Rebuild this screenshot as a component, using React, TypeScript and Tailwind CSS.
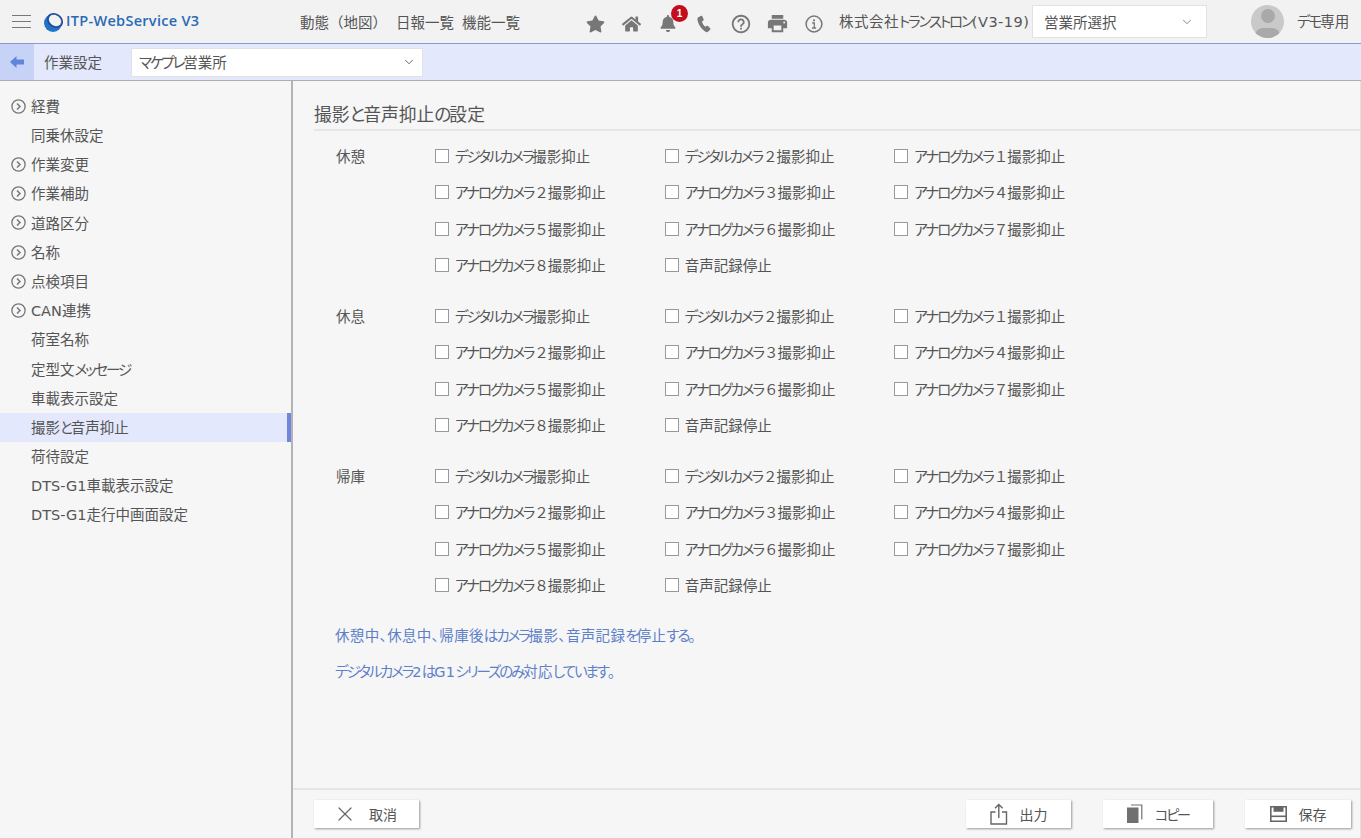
import { FaStar, FaHome, FaBell } from "react-icons/fa";
import { MdPrint, MdHelpOutline } from "react-icons/md";
import { ChevronDown, X } from "lucide-react";

const SIDE_ITEMS = [
  { label: "経費", arrow: true },
  { label: "同乗休設定" },
  { label: "作業変更", arrow: true },
  { label: "作業補助", arrow: true },
  { label: "道路区分", arrow: true },
  { label: "名称", arrow: true },
  { label: "点検項目", arrow: true },
  { label: "CAN連携", arrow: true },
  { label: "荷室名称" },
  { label: "定型文メッセージ" },
  { label: "車載表示設定" },
  { label: "撮影と音声抑止", active: true },
  { label: "荷待設定" },
  { label: "DTS-G1車載表示設定" },
  { label: "DTS-G1走行中画面設定" },
];

const OPTIONS = [
  "デジタルカメラ撮影抑止",
  "デジタルカメラ２撮影抑止",
  "アナログカメラ１撮影抑止",
  "アナログカメラ２撮影抑止",
  "アナログカメラ３撮影抑止",
  "アナログカメラ４撮影抑止",
  "アナログカメラ５撮影抑止",
  "アナログカメラ６撮影抑止",
  "アナログカメラ７撮影抑止",
  "アナログカメラ８撮影抑止",
  "音声記録停止",
];

const GROUPS = ["休憩", "休息", "帰庫"];

// kana in the picture are set narrower than kanji, full-width digits stay wide
function T({ text }: { text: string }) {
  const parts = text.split(/([\u3041-\u30ff]+|[１-８])/);
  return (
    <span className="pt-[2px]">
      {parts.map((p, i) => {
        if (i % 2 === 0) return <span key={i}>{p}</span>;
        if (/[１-８]/.test(p)) return <span key={i} className="-mr-[1px] ml-[1px] [font-feature-settings:normal]">{p}</span>;
        return <span key={i} className="tracking-[-2.100px]">{p}</span>;
      })}
    </span>
  );
}

function Logo() {
  return (
    <svg width="22" height="22" viewBox="0 0 22 22" className="shrink-0">
      <circle cx="10" cy="12" r="9" fill="#1f73c8" />
      <ellipse cx="12" cy="9.500" rx="6.500" ry="5.200" fill="#f2f2f2" transform="rotate(35 12 9.500)" />
      <ellipse cx="12" cy="9.500" rx="7.800" ry="6.200" fill="none" stroke="#2b4a94" strokeWidth="1.500" transform="rotate(35 12 9.500)" />
    </svg>
  );
}

function PhoneIcon() {
  return (
    <svg width="15" height="18" viewBox="0 0 15 18" fill="#777">
      <path d="M1 2.500 4.200.800c.5-.2.900 0 1.100.4l1.400 3.300c.2.400 0 .8-.3 1L5 6.500c.4 2 1.700 4 3.400 5.200l1.500-.9c.4-.2.800-.2 1.100.1l2.300 2.500c.3.3.3.800 0 1.100l-2.300 2.300c-.5.500-1.200.6-1.800.3C4.200 14.200.8 9 .4 3.700c0-.5.200-1 .6-1.200Z" />
    </svg>
  );
}

function InfoIcon() {
  return (
    <svg width="18" height="18" viewBox="0 0 18 18" fill="none" stroke="#777">
      <circle cx="9" cy="9" r="7.900" strokeWidth="1.500" />
      <circle cx="9" cy="5.300" r="1.100" fill="#777" stroke="none" />
      <path d="M7.200 8h2.100v4.800M7 13h4.100" strokeWidth="1.300" />
    </svg>
  );
}

function ArrowBullet() {
  return (
    <svg width="15" height="15" viewBox="0 0 15 15" fill="none" stroke="#777" className="shrink-0">
      <circle cx="7.500" cy="7.500" r="6.600" strokeWidth="1.300" />
      <path d="M6 4.500 9 7.500 6 10.500" strokeWidth="1.500" />
    </svg>
  );
}

function BackArrow() {
  return (
    <svg width="14" height="12" viewBox="0 0 14 12" fill="#5f86d8">
      <path d="M0 6 6.500 0v3.500H14v5H6.500V12Z" />
    </svg>
  );
}

function ShareIcon() {
  return (
    <svg width="18" height="22" viewBox="0 0 18 22" fill="none" stroke="#666" strokeWidth="1.400">
      <path d="M5.500 9H1v12h15.500V9H12" />
      <path d="M8.800 15V1.500M5 5.200 8.800 1.400l3.800 3.800" />
    </svg>
  );
}

function CopyIcon() {
  return (
    <svg width="16" height="20" viewBox="0 0 16 20">
      <path d="M0 3.500h11.500V19H0Z" fill="#707070" />
      <path d="M4 1h10.800v14.500" fill="none" stroke="#707070" strokeWidth="1.200" />
    </svg>
  );
}

function SaveIcon() {
  return (
    <svg width="17" height="16" viewBox="0 0 17 16">
      <path d="M.800.800h15.400v14.400H.800Z" fill="none" stroke="#666" strokeWidth="1.600" />
      <path d="M3.500 1h10v4.800h-10Z" fill="#666" />
      <path d="M1 9.500h15v1.600H1Z" fill="#666" />
    </svg>
  );
}

function FooterButton({ icon, label, width }: { icon: React.ReactNode; label: string; width: string }) {
  return (
    <button className={`flex h-[28px] items-center justify-center gap-[12px] bg-white text-[14px] text-[#555] shadow-[1px_1px_2px_#999] ${width}`}>
      {icon}
      <T text={label} />
    </button>
  );
}

export default function App() {
  return (
    <div className="flex h-screen flex-col overflow-hidden bg-[#f6f6f6] font-['DejaVu_Sans','Noto_Sans_CJK_JP',sans-serif] text-[14.500px] leading-none text-[#555] [font-feature-settings:'palt']">
      <header className="flex h-[44px] shrink-0 items-center border-b border-[#8f97d6] bg-[#f2f2f2]">
        <div className="ml-[12px] flex w-[19px] flex-col gap-[4.500px]">
          <div className="h-[1.500px] bg-[#777]" />
          <div className="h-[1.500px] bg-[#777]" />
          <div className="h-[1.500px] bg-[#777]" />
        </div>
        <div className="ml-[12px] flex w-[257px] items-center">
          <Logo />
          <span className="ml-[1px] font-['Open_Sans',sans-serif] text-[14.500px] font-semibold tracking-[0.300px] text-[#2a6ab5]">ITP-WebService V3</span>
        </div>
        <nav className="flex items-center pt-[3px] [font-feature-settings:normal]">
          <span className="w-[96px]">動態（地図）</span>
          <span className="w-[66px]">日報一覧</span>
          <span className="w-[59px]">機能一覧</span>
        </nav>
        <div className="ml-[65px] flex items-center pt-[4px] text-[#777]">
          <FaStar className="h-[18px] w-[19px]" />
          <FaHome className="ml-[17px] h-[18px] w-[19px]" />
          <div className="relative ml-[19px]">
            <FaBell className="h-[17px] w-[16px]" />
            <span className="absolute -top-[10px] left-[11px] flex h-[17px] w-[17px] items-center justify-center rounded-full bg-[#c40d1e] font-['Liberation_Sans',sans-serif] text-[10px] font-bold text-white">1</span>
          </div>
          <div className="ml-[21px] flex"><PhoneIcon /></div>
          <MdHelpOutline className="ml-[18px] h-[22px] w-[22px]" />
          <MdPrint className="ml-[14px] h-[23px] w-[23px]" />
          <div className="ml-[16px] flex"><InfoIcon /></div>
        </div>
        <span className="ml-[16px] w-[193px] whitespace-nowrap pt-[1px] tracking-[0.500px]"><T text="株式会社トランストロン(V3-19)" /></span>
        <div className="flex h-[33px] w-[175px] items-center justify-between border border-[#e2e2e2] bg-white pl-[11px] pr-[12px]">
          <span className="pt-[4px]">営業所選択</span>
          <ChevronDown className="h-[14px] w-[14px] text-[#777]" strokeWidth={1.500} />
        </div>
        <div className="relative ml-[44px] h-[33px] w-[33px] overflow-hidden rounded-full bg-[#c9c9c9]">
          <div className="absolute left-[10px] top-[4px] h-[14px] w-[14px] rounded-full bg-[#a9a9a9]" />
          <div className="absolute left-[4px] top-[23px] h-[14px] w-[25px] rounded-t-[8px] bg-[#a9a9a9]" />
        </div>
        <span className="ml-[13px] pt-[1px]"><T text="デモ専用" /></span>
      </header>

      <div className="flex h-[37px] shrink-0 items-center border-b border-[#aeaeae] bg-[#e3e8fc]">
        <div className="flex h-full w-[34px] items-center justify-center bg-[#c6d3f6]">
          <BackArrow />
        </div>
        <span className="ml-[10px] w-[87px] pt-[2px]">作業設定</span>
        <div className="flex h-[29px] w-[292px] items-center justify-between border border-[#e2e2e2] bg-white pl-[7px] pr-[6px]">
          <T text="マケプレ営業所" />
          <ChevronDown className="h-[14px] w-[14px] text-[#555]" strokeWidth={1.500} />
        </div>
      </div>

      <div className="flex min-h-0 flex-1">
        <aside className="w-[293px] shrink-0 border-r-2 border-[#b4b4b4] pt-[10.500px]">
          {SIDE_ITEMS.map((item) => (
            <div
              key={item.label}
              className={`flex h-[29.200px] items-center ${item.active ? "border-r-[4px] border-[#6f86dc] bg-[#e3e8fc]" : ""}`}
            >
              <div className="flex w-[31px] justify-end pr-[5px]">{item.arrow && <ArrowBullet />}</div>
              <T text={item.label} />
            </div>
          ))}
        </aside>

        <main className="flex min-w-0 flex-1 flex-col border-r border-[#e0e0e0]">
          <div className="flex-1 pl-[21px] pt-[25px]">
            <h1 className="border-b-2 border-[#e6e6e6] pb-[6px] text-[17.800px] font-normal leading-[17px]"><T text="撮影と音声抑止の設定" /></h1>
            <div className="pt-[6.500px]">
              {GROUPS.map((group) => (
                <section key={group} className="mb-[14px] flex">
                  <div className="ml-[22px] w-[99px] pt-[12px]">{group}</div>
                  <div className="grid grid-cols-[repeat(3,229.700px)] auto-rows-[36.500px]">
                    {OPTIONS.map((opt) => (
                      <label key={opt} className="flex items-center gap-[6px] whitespace-nowrap">
                        <span className="h-[14px] w-[14px] shrink-0 border border-[#999] bg-white" />
                        <T text={opt} />
                      </label>
                    ))}
                  </div>
                </section>
              ))}
              <p className="ml-[21px] mt-[25px] tracking-[0.350px] text-[#5d80c9]"><T text="休憩中、休息中、帰庫後はカメラ撮影、音声記録を停止する。" /></p>
              <p className="ml-[21px] mt-[22px] tracking-[0.350px] text-[#5d80c9]"><T text="デジタルカメラ2はG1シリーズのみ対応しています。" /></p>
            </div>
          </div>
          <footer className="flex h-[50px] shrink-0 items-center justify-between border-t-2 border-[#e6e6e6] pl-[21px] pr-[9px]">
            <FooterButton icon={<X className="-ml-[3px] h-[24px] w-[24px] text-[#666]" strokeWidth={1.200} />} label="取消" width="w-[105px]" />
            <div className="flex gap-[32px]">
              <FooterButton icon={<ShareIcon />} label="出力" width="w-[105px]" />
              <FooterButton icon={<CopyIcon />} label="コピー" width="w-[110px]" />
              <FooterButton icon={<SaveIcon />} label="保存" width="w-[106px]" />
            </div>
          </footer>
        </main>
      </div>
    </div>
  );
}
